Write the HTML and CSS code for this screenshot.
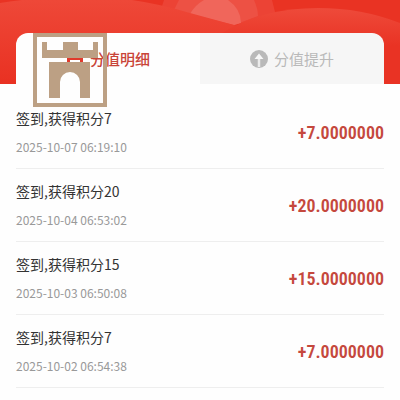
FILE: index.html
```html
<!DOCTYPE html>
<html lang="zh-CN">
<head>
	<meta charset="UTF-8">
	<meta name="viewport" content="width=device-width, initial-scale=1.0">
	<title>分值明细</title>
	<link rel="stylesheet" href="styles.css">
</head>
<body>

	<header class="header">
		<svg class="header__bg" viewBox="0 0 400 84" preserveAspectRatio="xMidYMin slice" aria-hidden="true">
			<defs>
				<linearGradient id="base" x1="0" y1="0" x2="0" y2="1">
					<stop offset="0" stop-color="#ee4838"/>
					<stop offset="1" stop-color="#e93122"/>
				</linearGradient>
				<linearGradient id="hill" x1="0" y1="0" x2="0" y2="1">
					<stop offset="0" stop-color="#ee4a3a"/>
					<stop offset=".5" stop-color="#e93324"/>
				</linearGradient>
			</defs>
			<rect width="400" height="84" fill="#e93323"/>
			<path d="M164 0H272L276 16L234 25L160 12Z" fill="#ec4335"/>
			<path d="M179 0H254Q258 9 258 16L234 25L173 12Z" fill="#ed5144"/>
			<path d="M204 0H228Q241 9 241 23L234 25L190 14Q195 5 204 0Z" fill="#f0665b"/>
			<path d="M0 3Q12 1 22 0H132Q160 4 190 13L234 25Q252 31 264 40V84H0Z" fill="url(#base)"/>
			<path d="M222 33Q262 8 318 8Q362 8 400 23V84H222Z" fill="url(#hill)"/>
		</svg>
		<nav class="tabs">
			<button class="tab tab--active" type="button">
				<svg class="tab__icon" viewBox="0 0 18 18" aria-hidden="true">
					<path d="M1 3H6Q6 0 9 0T12 3H17V18H1Z" fill="#e03a2d"/>
					<path d="M4 11H14" stroke="#fff" stroke-width="2"/>
				</svg>
				<span>分值明细</span>
			</button>
			<button class="tab" type="button">
				<svg class="tab__icon" viewBox="0 0 18 18" aria-hidden="true">
					<circle cx="9" cy="9" r="9" fill="#b9b9b9"/>
					<path d="M9 3.5L13.5 9H10.2V17H7.8V9H4.5Z" fill="#f7f7f7"/>
					<path d="M9 9V18" stroke="#c4c4c4" stroke-width=".5"/>
				</svg>
				<span>分值提升</span>
			</button>
		</nav>
	</header>

	<main>
		<ul class="list">
			<li class="item">
				<div class="item__info">
					<p class="item__title">签到,获得积分7</p>
					<time class="item__time">2025-10-07 06:19:10</time>
				</div>
				<span class="item__value">+7.0000000</span>
			</li>
			<li class="item">
				<div class="item__info">
					<p class="item__title">签到,获得积分20</p>
					<time class="item__time">2025-10-04 06:53:02</time>
				</div>
				<span class="item__value">+20.0000000</span>
			</li>
			<li class="item">
				<div class="item__info">
					<p class="item__title">签到,获得积分15</p>
					<time class="item__time">2025-10-03 06:50:08</time>
				</div>
				<span class="item__value">+15.0000000</span>
			</li>
			<li class="item">
				<div class="item__info">
					<p class="item__title">签到,获得积分7</p>
					<time class="item__time">2025-10-02 06:54:38</time>
				</div>
				<span class="item__value">+7.0000000</span>
			</li>
		</ul>
	</main>

	<!-- castle badge, floats over the tabs -->
	<svg class="badge" viewBox="0 0 74 74" aria-hidden="true">
		<path d="M2 2H72V72H2Z" fill="none" stroke="#bca084" stroke-width="4"/>
		<path d="M9 9H14V17H30V9H45V17H60V9H65V25H9Z" fill="#bca084"/>
		<path d="M16 29H57V65H47V49A10 10 0 0 0 27 49V65H16Z" fill="#bca084"/>
	</svg>

</body>
</html>
```

FILE: styles.css
```css
* {
    margin: 0;
    padding: 0;
    box-sizing: border-box;
}

body {
    background: #fefefe;
    font-family: "Noto Sans CJK SC", sans-serif;
    color: #333;
}

.header {
    position: relative;
    padding: 33px 16px 0;
    background: #e93223;
}

.header__bg {
    position: absolute;
    top: 0;
    left: 0;
    width: 100%;
    height: 100%;
}

.tabs {
    position: relative;
    display: flex;
    overflow: hidden;
    border-radius: 12px 12px 0 0;
}

.tab {
    display: flex;
    flex: 1;
    align-items: center;
    justify-content: center;
    gap: 6px;
    height: 51px;
    border: none;
    background: #f6f6f6;
    color: #b9b9b9;
    font-family: inherit;
    font-size: 15px;
    cursor: pointer;
}

.tab--active {
    background: #fefefe;
    color: #c94438;
    font-weight: 500;
}

.tab__icon {
    width: 18px;
    height: 18px;
}

.list {
    padding: 12px 16px 0;
    list-style: none;
}

.item {
    display: flex;
    align-items: center;
    justify-content: space-between;
    height: 73px;
    border-bottom: 1px solid #eee;
}

.item__title {
    font-size: 14px;
    line-height: 20px;
}

.item__time {
    display: block;
    margin-top: 10px;
    color: #999;
    font-size: 12px;
    line-height: 18px;
}

.item__value {
    color: #c5483d;
    font-family: "Roboto Condensed", Roboto, sans-serif;
    font-size: 18px;
    font-weight: 600;
}

.badge {
    position: absolute;
    top: 33px;
    left: 33px;
    width: 74px;
    height: 74px;
}
```
